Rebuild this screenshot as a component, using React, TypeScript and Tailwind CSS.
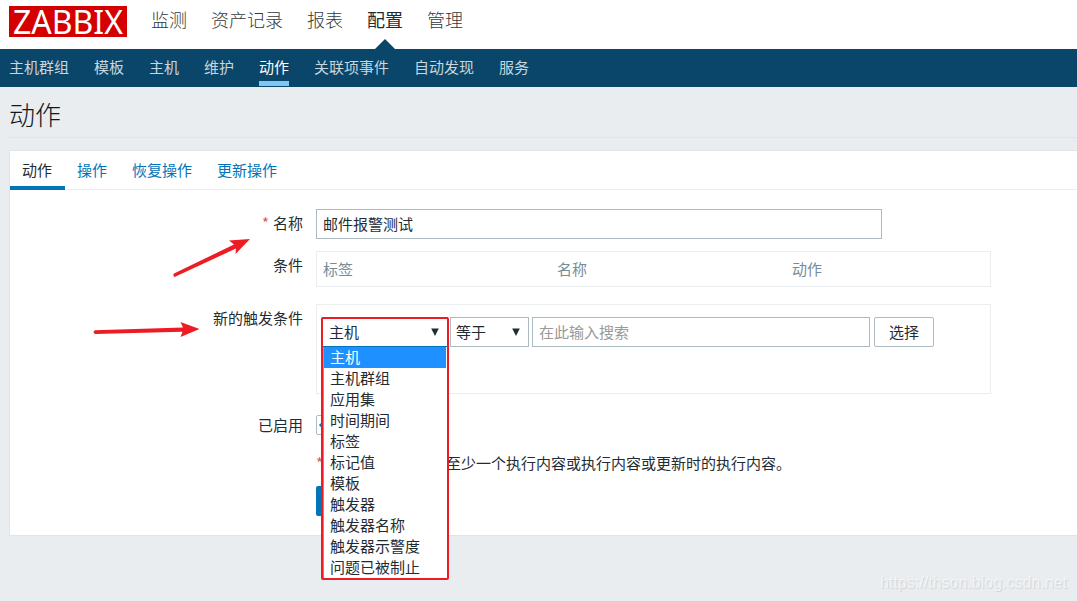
import React from "react";

const mainMenu = ["监测", "资产记录", "报表", "配置", "管理"];
const subMenu = ["主机群组", "模板", "主机", "维护", "动作", "关联项事件", "自动发现", "服务"];
const tabs = ["动作", "操作", "恢复操作", "更新操作"];
const conditionTypes = [
  "主机",
  "主机群组",
  "应用集",
  "时间期间",
  "标签",
  "标记值",
  "模板",
  "触发器",
  "触发器名称",
  "触发器示警度",
  "问题已被制止",
];

function Caret() {
  return (
    <svg viewBox="0 0 8 8" className="pointer-events-none absolute right-[9px] top-[11px] h-2 w-2 fill-[#1f2c33]" aria-hidden="true">
      <path d="M0.2 0.5h7.6L4 8z" />
    </svg>
  );
}

function Header() {
  return (
    <header>
      <div className="flex h-[49px] items-start bg-white pl-[9px]">
        <a
          href="#home"
          className="mt-[6px] flex h-[31px] w-[118px] items-center justify-center bg-[#d40000] font-['Noto_Sans',sans-serif] text-[32px] font-normal leading-none text-white"
        >
          ZABBIX
        </a>
        <nav className="ml-6 flex h-[49px] gap-6 text-[18px] font-light leading-[38px] text-[#35393c]">
          {mainMenu.map((item) => (
            <a key={item} href="#menu" className={item === "配置" ? "relative font-normal text-[#1f2c33]" : ""}>
              {item}
              {item === "配置" && (
                <svg viewBox="0 0 20 10" className="absolute bottom-0 left-2 h-[10px] w-5 fill-[#0a466a]" aria-hidden="true">
                  <path d="M0 10L10 0l10 10z" />
                </svg>
              )}
            </a>
          ))}
        </nav>
      </div>
      <nav className="flex h-[38px] gap-[25px] bg-[#0a466a] pl-[9px] text-[15px] leading-[36px] text-[#c8d6df]">
        {subMenu.map((item) => (
          <a
            key={item}
            href="#submenu"
            className={item === "动作" ? "h-[37px] border-b-[5px] border-[#7fc6f5] text-white" : ""}
          >
            {item}
          </a>
        ))}
      </nav>
    </header>
  );
}

function ConditionTypeSelect() {
  return (
    <div className="relative w-[126px]">
      <select
        aria-label="条件类型"
        className="block h-[30px] w-full appearance-none border border-[#0275b8] bg-white pb-[2px] pl-[6px] text-[#1f2c33] outline-none"
      >
        {conditionTypes.map((t) => (
          <option key={t}>{t}</option>
        ))}
      </select>
      <Caret />
      <div className="absolute -left-px top-0 z-20 w-[128px] rounded-xs border-2 border-[#ed1c24] pt-7">
        <ul role="listbox" aria-label="条件类型" className="border-l border-[#7a9cc9] bg-white leading-[21px]">
          {conditionTypes.map((t, i) => (
            <li
              key={t}
              role="option"
              aria-selected={i === 0}
              className={
                i === 0
                  ? "mr-px h-[21px] bg-[#1e90ff] pl-[6px] leading-[19px] text-white"
                  : "h-[21px] pl-[6px] leading-[19px]"
              }
            >
              {t}
            </li>
          ))}
        </ul>
      </div>
    </div>
  );
}

export default function App() {
  return (
    <div className="relative min-h-screen overflow-x-hidden bg-[#e9edf0] font-['Noto_Sans_CJK_SC',sans-serif] text-[15px] font-normal leading-[21px] text-[#1f2c33]">
      <Header />
      <main className="pl-[9px]">
        <h1 className="h-[51px] border-b border-[#dfe4e7] text-[26px] font-light leading-[54px] text-[#10191e]">动作</h1>
        <form className="relative mt-3 border-y border-l border-[#dfe4e7] bg-white pb-[19px]">
          <div role="tablist" className="flex h-[39px] border-b border-[#ebeef0]">
            {tabs.map((tab, i) => (
              <button
                key={tab}
                type="button"
                role="tab"
                aria-selected={i === 0}
                className={
                  i === 0
                    ? "h-[39px] border-b-4 border-[#0275b8] pl-3 pr-[13px] pt-px"
                    : "h-[39px] border-b-4 border-transparent pl-3 pr-[13px] pt-px text-[#0275b8]"
                }
              >
                {tab}
              </button>
            ))}
          </div>

          <div className="mt-[19px] grid grid-cols-[293px_minmax(0,675px)] gap-x-[13px]">
            <label htmlFor="name" className="pt-[3px] text-right">
              <span className="mr-1 text-[#e45959]">*</span>名称
            </label>
            <input
              id="name"
              defaultValue="邮件报警测试"
              className="mb-3 h-[30px] w-[566px] border border-[#acbbc2] bg-white px-[6px] pb-[2px] outline-none"
            />

            <span className="pt-[3px] text-right">条件</span>
            <div className="mb-[17px] h-[36px] border border-[#ebeef0] px-[6px]">
              <table className="w-full table-fixed text-left text-[#768d99]">
                <thead>
                  <tr className="h-[32px]">
                    <th className="w-[234px] font-normal">标签</th>
                    <th className="w-[235px] font-normal">名称</th>
                    <th className="font-normal">动作</th>
                  </tr>
                </thead>
              </table>
            </div>

            <span className="pt-[3px] text-right">新的触发条件</span>
            <div className="mb-[20px] h-[90px] border border-[#ebeef0] pl-[5px] pt-3">
              <div className="flex">
                <ConditionTypeSelect />
                <div className="relative ml-[2px] w-[79px]">
                  <select
                    aria-label="运算符"
                    className="block h-[30px] w-full appearance-none border border-[#acbbc2] bg-white pb-[2px] pl-[5px] outline-none"
                  >
                    <option>等于</option>
                  </select>
                  <Caret />
                </div>
                <input
                  aria-label="搜索"
                  placeholder="在此输入搜索"
                  className="ml-[3px] h-[30px] w-[338px] border border-[#acbbc2] bg-white px-[6px] pb-[2px] outline-none placeholder:text-[#999999]"
                />
                <button type="button" className="ml-1 h-[30px] w-[60px] rounded-xs border border-[#acbbc2] bg-white pb-[2px]">
                  选择
                </button>
              </div>
            </div>

            <label htmlFor="enabled" className="text-right">
              已启用
            </label>
            <div className="relative mb-[17px] mt-px h-5 w-5">
              <input
                id="enabled"
                type="checkbox"
                defaultChecked
                className="block h-5 w-5 appearance-none rounded-xs border border-[#acbbc2] bg-white"
              />
              <svg viewBox="0 0 20 20" className="pointer-events-none absolute inset-0 h-5 w-5 fill-none stroke-[#0275b8] stroke-3" aria-hidden="true">
                <path d="M4 9l5 5 7-8" />
              </svg>
            </div>

            <p className="col-start-2 mb-[13px] flex">
              <span className="w-[130px] text-[#e45959]">*</span>
              至少一个执行内容或执行内容或更新时的执行内容。
            </p>

            <div className="col-start-2 flex h-[30px]">
              <button type="submit" aria-label="提交" className="w-[60px] rounded-xs bg-[#0275b8]" />
              <button type="button" aria-label="返回" className="ml-3 w-[60px] rounded-xs border border-[#0275b8] bg-white" />
            </div>
          </div>

          <svg
            viewBox="0 0 160 110"
            className="pointer-events-none absolute left-[80px] top-[84px] h-[110px] w-[160px] fill-[#ed1c24]"
            aria-hidden="true"
          >
            <path d="M84 38.500Q82.500 40.500 84.500 42L146 13.500L145.500 19L160 4L139 5.500L144 9.500Z" />
            <path d="M5 95.200Q2 97 5 99L92.500 96.800L90.500 102L109.500 94L90.500 87L93 92.500Z" />
          </svg>
        </form>
      </main>
      <p className="absolute bottom-2 right-[10px] font-['Liberation_Sans',sans-serif] text-[16px] text-white/60 [text-shadow:1px_1px_1px_#cfd3d6]">
        https://thson.blog.csdn.net
      </p>
    </div>
  );
}
